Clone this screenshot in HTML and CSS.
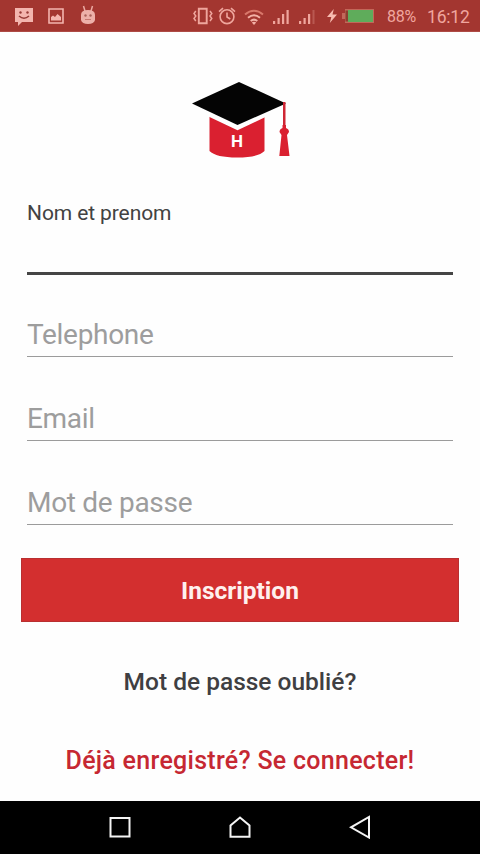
FILE: index.html
```html
<!DOCTYPE html>
<html lang="fr">
<head>
<meta charset="utf-8">
<title>Inscription</title>
<link rel="stylesheet" href="styles.css">
</head>
<body>
<div class="screen">
  <header class="status">
    <svg class="message" width="20" height="19" viewBox="0 0 20 19"><path d="M1 1h18v14H8l-4 4v-4H1z" fill="#f3b5ae"/><path d="M5 9q5 4.500 10 0" fill="none" stroke="#963b36" stroke-width="1.500"/><circle cx="6.500" cy="5.500" r="1.200" fill="#963b36"/><circle cx="13.500" cy="5.500" r="1.200" fill="#963b36"/></svg>
    <svg class="photo" width="16" height="16" viewBox="0 0 16 16"><path d="M1 1h14v14H1z" fill="none" stroke="#f3b5ae" stroke-width="1.600"/><path d="M3 12.500V9l2-1.500 2 1.500 2.500-3 3.500 3v3.500z" fill="#f3b5ae"/></svg>
    <svg class="droid" width="16" height="20" viewBox="0 0 16 20"><path d="M3.500 1l1.500 5M12.500 1L11 6" stroke="#eba9a2" stroke-width="1.500"/><path d="M1 10q0-5 7-5t7 5v5q-1 4-7 4t-7-4z" fill="#edb0a9"/><circle cx="5.500" cy="10.500" r="1.200" fill="#a9615b"/><circle cx="10.500" cy="10.500" r="1.200" fill="#a9615b"/><path d="M5 14.500h6" stroke="#c77972"/></svg>
    <svg class="vibrate" width="20" height="18" viewBox="0 0 20 18"><g fill="none" stroke="#efa69d" stroke-width="1.500"><path d="M5.800 1.800h7.900v14.400H5.800z" stroke-width="1.900"/><path d="M2.800 4L1 6.500l1.800 2.500L1 11.500 2.800 14M17 4l1.800 2.500L17 9l1.800 2.500L17 14"/></g></svg>
    <svg class="alarm" width="18" height="18" viewBox="0 0 18 18"><g fill="none" stroke="#efa69d" stroke-width="1.600"><circle cx="9" cy="9.700" r="6.900"/><path d="M1 4.600L5 1.200M17 4.600L13 1.200M9 5.500V10l3.300 2"/></g></svg>
    <svg class="wifi" width="20" height="16" viewBox="0 0 20 16"><g fill="none" stroke="#f3b1a6" stroke-width="2"><path d="M1 5.500q9-7.500 18 0" stroke="#d9786b"/><path d="M4 8.800q6-5 12 0M6.700 12q3.300-2.700 6.600 0"/></g><path d="M7.800 13.500q2.200-1.500 4.400 0L10 16z" fill="#f3b1a6"/></svg>
    <svg class="signal" width="18" height="15" viewBox="0 0 18 15"><path d="M1 12h2.200v3H1zM5.500 9h2.200v6H5.500zM10 5h2.200v10H10zM14.500 1h2.200v14h-2.200z" fill="#efa69d"/></svg>
    <svg class="signal second" width="18" height="15" viewBox="0 0 18 15"><path d="M1 12h2.200v3H1zM5.500 9h2.200v6H5.500zM10 5h2.200v10H10z" fill="#efa69d"/><path d="M14.500 1h2v14h-2z" fill="#b95851"/></svg>
    <svg class="bolt" width="10" height="14" viewBox="0 0 10 14"><path d="M6.800 0L0 8h4.300L2.800 14 10 5.500H5.500z" fill="#f8bbb0"/></svg>
    <svg class="battery" width="34" height="16" viewBox="0 0 34 16"><path d="M4 1h29v14H4V11H1V5h3z" fill="#c2685a"/><path d="M4.500 2.500h3v11h-3z" fill="#8b3f2f"/><path d="M7 2h25v12H7z" fill="#5fac5b"/></svg>
    <span class="percent">88%</span>
    <span class="clock">16:12</span>
  </header>
  <main class="content">
    <svg class="logo" width="104" height="80" viewBox="0 0 104 80">
      <path d="M20.500 36L48 48.500 75.500 36v35Q69 77.500 48 77.500T20.500 71z" fill="#da2030"/>
      <path d="M20 34L48.500 47.500 77 34" fill="none" stroke="#fff" stroke-width="5"/>
      <path d="M3 23.500L50 2l47 21.500L48.500 45z" fill="#040404"/>
      <path d="M94 22h2.500v24H94z" fill="#cf2634"/>
      <path d="M93.500 45h3.500v3q3 1 3 4l-2 3 2.500 21H90.300l2.200-21-2-3q0-3 3-4z" fill="#da2030"/>
      <text class="logo-letter" x="48" y="66.500" text-anchor="middle">H</text>
    </svg>
    <form class="form">
      <label class="field active">Nom et prenom</label>
      <div class="field">Telephone</div>
      <div class="field">Email</div>
      <div class="field">Mot de passe</div>
      <button class="submit" type="button">Inscription</button>
    </form>
    <a class="link">Mot de passe oublié?</a>
    <a class="link login">Déjà enregistré? Se connecter!</a>
  </main>
  <nav class="nav">
    <svg width="22" height="24" viewBox="0 0 22 24"><path d="M1.500 3h19v18.500h-19z"/></svg>
    <svg width="22" height="24" viewBox="0 0 22 24"><path d="M1.500 21.800V10.500L11 2.500l9.500 8v11.300z"/></svg>
    <svg width="22" height="24" viewBox="0 0 22 24"><path d="M20 2v20.500L2 12.300z"/></svg>
  </nav>
</div>
</body>
</html>
```
FILE: styles.css
```css
* { box-sizing: border-box; }
body { margin: 0; font-family: Roboto, sans-serif; background: #fefefe; }
.screen { width: 480px; height: 854px; display: flex; flex-direction: column; overflow: hidden; }
.status { height: 32px; flex: none; display: flex; align-items: center; background: #a33630; color: #f0a69f; border-bottom: 1px solid #ae4b45; white-space: nowrap; }
.status svg { flex: none; }
.message { margin-left: 14px; margin-top: 1px; }
.photo { margin-left: 14px; }
.droid { margin-left: 16px; margin-top: -1px; }
.vibrate { margin-left: 97px; }
.alarm { margin-left: 5px; }
.wifi { margin-left: 8px; margin-top: 2px; }
.signal { margin-left: 8px; margin-top: 2px; }
.signal.second { margin-left: 8px; }
.bolt { margin-left: 11px; }
.battery { margin-left: 4px; }
.percent { width: 40px; margin-left: 12px; font-size: 16px; line-height: 20px; margin-top: 2px; letter-spacing: -0.2px; }
.clock { font-size: 17.5px; line-height: 20px; margin-top: 2px; letter-spacing: -0.2px; }
.content { flex: 1; padding: 46px 21px 0; display: flex; flex-direction: column; }
.logo { margin-left: 168px; margin-top: 2px; flex: none; }
.logo-letter { font: 700 17px Roboto, sans-serif; fill: #fff; }
.form { margin-top: 41px; display: flex; flex-direction: column; }
.field { height: 39px; margin: 0 6px 45px; padding-top: 1px; border-bottom: 1px solid #9b9b9b; color: #9d9d9d; font-size: 28px; line-height: 32px; letter-spacing: -0.3px; }
.field.active { height: 74px; margin-bottom: 43px; padding-top: 0; border-bottom: 3px solid #454545; color: #424242; font-size: 21px; line-height: 24px; letter-spacing: -0.1px; }
.submit { height: 64px; margin-top: -12px; border: 1px solid #b92f30; background: #d32f2f; color: #fff0ee; font: 700 24.5px/30px Roboto, sans-serif; padding: 2px 0 0; }
.link { margin-top: 45px; line-height: 30px; font-size: 24.5px; font-weight: 500; text-align: center; color: #3f3f42; }
.login { margin-top: 49px; font-size: 25px; letter-spacing: 0.28px; color: #c62832; }
.nav { height: 53px; flex: none; padding-bottom: 1px; background: #000; display: flex; justify-content: center; align-items: center; gap: 98px; }
.nav svg { fill: none; stroke: #f4f4f4; stroke-width: 2; }
```
